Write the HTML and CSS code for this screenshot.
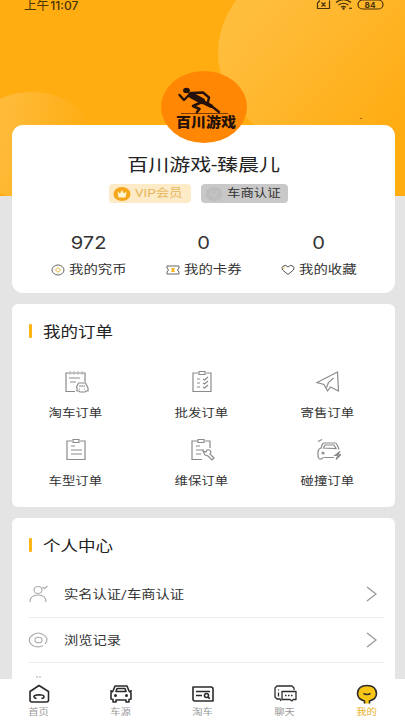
FILE: index.html
```html
<!DOCTYPE html>
<html lang="zh-CN">
<head>
<meta charset="utf-8">
<title>我的</title>
<link rel="stylesheet" href="styles.css">
</head>
<body>
<div class="screen">
  <svg class="backdrop" width="405" height="196" viewBox="0 0 405 196">
    <defs>
      <linearGradient id="g1" x1="0" y1="0.2" x2="0.8" y2="0.8"><stop offset="0.2" stop-color="#ffbd3c"/><stop offset="1" stop-color="#ffac12"/></linearGradient>
      <linearGradient id="g2" x1="0.3" y1="0.3" x2="0.9" y2="0.4"><stop offset="0" stop-color="#ffba38"/><stop offset="1" stop-color="#ffad12"/></linearGradient>
    </defs>
    <rect width="405" height="196" fill="#ffad10"/>
    <ellipse cx="338" cy="53" rx="120" ry="100" fill="url(#g1)"/>
    <ellipse cx="32" cy="146" rx="65" ry="54" fill="url(#g2)"/>
    <path d="M360 118h2v1h-2z" fill="#a66a00"/>
  </svg>

  <header class="status">
    <span class="clock">上午<span class="time">11:07</span></span>
    <svg width="72" height="12" viewBox="0 -.5 72 12" fill="none" stroke="#49330b" stroke-width="1.2">
      <path d="M4 0L1.500 2.500V8H13.500V0M5.500 2l4 4m0-4l-4 4"/>
      <path d="M20 2q7.500-5.500 15 0M22.500 4.500q5-3.500 10 0M25 6.700q2.500-1.500 5 0"/><circle cx="27.500" cy="8" r=".6"/><path d="M33 7.800h3"/>
      <rect x="42" y="-.5" width="25" height="9" rx="4.500"/>
      <text x="48.500" y="7" textLength="11" lengthAdjust="spacingAndGlyphs" class="battery">84</text>
    </svg>
  </header>

  <main>
    <section class="card profile">
      <svg class="avatar" width="88" height="72" viewBox="0 0 88 72">
        <ellipse cx="44" cy="36" rx="43" ry="36" fill="#ff8704"/>
        <path d="M21 42.500h47" stroke="#5c2705" stroke-width=".8"/>
        <g fill="none" stroke="#241109" stroke-linejoin="round" stroke-linecap="round">
          <path d="M31 24L42 30" stroke-width="6"/>
          <path d="M29 24l-5 5-4.500-5" stroke-width="2.400"/>
          <path d="M32 22l11-.5 6 5-1 4.500" stroke-width="2.400"/>
          <path d="M42 31L33 35l6.500 3-2.500 3" stroke-width="2.600"/>
          <path d="M43 31l8 4" stroke-width="4"/>
          <path d="M52 35.500l7 5.500" stroke-width="2.300"/>
        </g>
        <ellipse cx="26.500" cy="19.500" rx="3.400" ry="2.700" fill="#241109"/>
        <text x="16" y="56" textLength="60" lengthAdjust="spacingAndGlyphs" class="logo">百川游戏</text>
      </svg>
      <h1><span class="wide">百川游戏-臻晨儿</span></h1>
      <div class="badges">
        <span class="badge vip"><svg width="18" height="16" viewBox="0 0 18 16"><ellipse cx="9" cy="8" rx="8.500" ry="7" fill="#f5a719"/><path d="M4.500 5.500l2.500 2 2-3.500 2 3.500 2.500-2-1 6h-7z" fill="#fff6d6"/></svg><span class="wide left">VIP会员</span></span>
        <span class="badge dealer"><svg width="18" height="16" viewBox="0 0 18 16"><ellipse cx="9" cy="8" rx="8.500" ry="7" fill="#bdbdbd"/><path d="M5 5l4 6 4-6" fill="none" stroke="#c9c9c9"/></svg><span class="wide left">车商认证</span></span>
      </div>
      <div class="stats">
        <div class="stat"><b><span class="wide">972</span></b>
          <p><svg width="14" height="12" viewBox="0 0 14 12" fill="none"><ellipse cx="7" cy="6" rx="6" ry="5" stroke="#666"/><path d="M7 3.700L9.700 6 7 8.300 4.300 6z" stroke="#e9b236"/></svg><span class="wide left">我的究币</span></p></div>
        <div class="stat"><b><span class="wide">0</span></b>
          <p><svg width="14" height="12" viewBox="0 0 14 12" fill="none"><path d="M1 2h12v2q-3 2 0 4v2H1V8q3-2 0-4z" stroke="#666"/><path d="M5 4h4L8 6l1 2H5l1-2z" fill="#f5b51d"/></svg><span class="wide left">我的卡券</span></p></div>
        <div class="stat"><b><span class="wide">0</span></b>
          <p><svg width="14" height="12" viewBox="0 0 14 12" fill="none"><path d="M7 10.500L1.600 6Q0 3.500 2 2.200 5 .3 7 3q2-2.700 5-.8 2 1.300.4 3.800z" stroke="#555"/><path d="M2.500 5Q2.300 3 4.500 2.800" stroke="#ecd36b"/></svg><span class="wide left">我的收藏</span></p></div>
      </div>
    </section>

    <section class="card orders">
      <h2><i></i><span class="wide left">我的订单</span></h2>
      <div class="grid">
        <div class="order"><svg viewBox="0 0 26 24"><path d="M12 21.500H3V3h3m2 0h2m2 0h2m2 0h2m2 0h2v9M7 1.500v3m4-3v3m4-3v3m4-3v3M6 8h11M7 12h6"/><path d="M13.500 17l2-4h7l2 4 .5 1v3h-2l-1 1h-5l-1-1h-2v-3zM16 16h6m-6 3h1m4 0h1"/></svg><span class="wide">淘车订单</span></div>
        <div class="order"><svg viewBox="0 0 26 24"><path d="M9 3H4v18.500h18V3h-5M10 1.500h6v3h-6zM8 9h3m-3 4h3m-3 4h3M14 9l1.500 1 3.500-3m-5 6l1.500 1 3.500-3m-5 6l1.500 1 3.500-3"/></svg><span class="wide">批发订单</span></div>
        <div class="order"><svg viewBox="0 0 26 24"><path d="M22.500 2L2 12.500l7 2L12.500 21l3-4 8 4zM18.500 8l-5 4.500-2 5"/></svg><span class="wide">寄售订单</span></div>
        <div class="order"><svg viewBox="0 0 26 24"><path d="M9 3H4v18.500h18V3h-5M10 1.500h6v3h-6zM8 8h4m-4 4h11M8 16h11"/></svg><span class="wide">车型订单</span></div>
        <div class="order"><svg viewBox="0 0 26 24"><path d="M9 3H3v18.500h10M16 3h5v7M9 1.500h6v3H9zM7 8h4m-4 4h8m-8 4h5"/><path d="M14 13l3 1 1-2q3-1 4 2l-1 2 4 4-2 2-4-4-3-1z"/></svg><span class="wide">维保订单</span></div>
        <div class="order"><svg viewBox="0 0 26 24"><path d="M19 19.500H8.500M8 19.500q-1 2-3.500 1.500-1.500-.5-1.500-3v-4q0-3 3-4l1.500-4Q8 5 9.500 5h10.500q1.500 0 2 1.500l2 5M8.500 10l1.500-3h9l2 3.500zM3 3.500l4-2"/><circle cx="8" cy="15" r="1"/><path d="M25 13.500l-5 4h3l-2 4 5-5h-3z"/></svg><span class="wide">碰撞订单</span></div>
      </div>
    </section>

    <section class="card center">
      <h2><i></i><span class="wide left">个人中心</span></h2>
      <div class="row"><svg width="22" height="18" viewBox="0 0 22 18"><ellipse cx="10" cy="5" rx="4" ry="3.500"/><path d="M2 17q0-7 8-7t8 7M14.500 2l2 1.500L19.500 1"/></svg><span class="wide left">实名认证/车商认证</span><svg class="arrow" width="11" height="16" viewBox="0 0 11 16"><path d="M1 1l9 7-9 7"/></svg></div>
      <div class="row"><svg width="22" height="18" viewBox="0 0 22 18"><path d="M15 14.800Q10 17 5 14.800-2.500 9 5 3.800q6-4 12 1 4 3.700 0 8"/><ellipse cx="10.500" cy="9" rx="3.500" ry="2.800"/></svg><span class="wide left">浏览记录</span><svg class="arrow" width="11" height="16" viewBox="0 0 11 16"><path d="M1 1l9 7-9 7"/></svg></div>
      <div class="row"><svg width="22" height="18" viewBox="0 0 22 18"><path d="M8 1h2m1 0h2"/></svg></div>
    </section>
  </main>

  <nav class="tabs">
    <div class="tab"><svg viewBox="0 0 24 20"><path d="M12 1.500L21.500 7.500V16q0 2-2 2H5q-2 0-2-2V7.500z"/><path d="M9.500 14.500q-2.500-.4-2.500-2t5-1.800q5 0 5 1.800t-2.500 2"/></svg><span class="wide">首页</span></div>
    <div class="tab"><svg viewBox="0 0 24 20"><path d="M4 7l2-5h12l2 5 2 2v6l-2 .5V18h-3v-2H7v2H4v-2.500L2 15V9zM7 7.500l1-3h8l1 3zM1 7h2m18 0h2"/><circle cx="6.500" cy="11.500" r=".7"/><circle cx="17.500" cy="11.500" r=".7"/></svg><span class="wide">车源</span></div>
    <div class="tab"><svg viewBox="0 0 24 20"><path d="M2 3h18q2 0 2 2v12H4q-2 0-2-2zM5 7.500h14M5 11.500h6"/><circle cx="15.500" cy="11.500" r="2"/><path d="M17 13.500l2 1"/></svg><span class="wide">淘车</span></div>
    <div class="tab"><svg viewBox="0 0 24 20" class="chat"><path d="M7.500 15H4l-2-2V4l2-2h15l2 2v2M7 15l1 2M5.500 5.500v1m0 2v4"/><path d="M9 7.500h14v8h-3l-1 1.500-2-1.500H9zM12 11.500h1.500m1.500 0h1.500m1.500 0h1.500"/></svg><span class="wide">聊天</span></div>
    <div class="tab active"><svg viewBox="0 0 24 20"><path d="M9.500 19.500V17Q2.500 15 2.500 9.500 3 1.500 12 1.500t9.500 8Q21.500 15 14.500 17v2.500" fill="#f9c514"/><path d="M8.500 9.500q3.500 2 7 0"/></svg><span class="wide">我的</span></div>
  </nav>
</div>
</body>
</html>
```
FILE: styles.css
```css
* { box-sizing: border-box; margin: 0; padding: 0; }
body { width: 405px; height: 720px; overflow: hidden; font-family: Roboto, "Noto Sans CJK SC", sans-serif; color: #333; }
.screen { position: relative; height: 720px; display: flex; flex-direction: column; background: #e4e4e4; overflow: hidden; }
.backdrop { position: absolute; left: 0; top: 0; }
.wide { display: inline-block; white-space: nowrap; transform: scaleX(1.2); }
.left { transform-origin: left center; }
.status { position: relative; flex: none; height: 125px; display: flex; align-items: flex-start; justify-content: space-between; padding: 0 17px 0 24px; color: #49330b; }
.clock { font: 12px/9px "Noto Sans CJK SC", sans-serif; transform: scaleX(1.05); transform-origin: left center; }
.time { font: 500 11.500px/9px Inter, sans-serif; margin-left: 1px; }
.battery { font: 700 8px Inter, sans-serif; fill: #49330b; stroke: none; }
.logo { font: 900 14px "Noto Sans CJK SC", sans-serif; fill: #241109; }
main { position: relative; flex: 1; min-height: 0; padding: 0 10px 0 12px; display: flex; flex-direction: column; }
.card { flex: none; background: #fff; border-radius: 6px; }
.profile { height: 168px; border-radius: 11px; margin-bottom: 11px; display: flex; flex-direction: column; align-items: center; }
.avatar { margin-top: -54px; flex: none; }
h1 { margin-top: 9px; font-size: 17.500px; line-height: 26px; font-weight: 400; color: #222; }
.badges { display: flex; gap: 10px; margin-top: 6px; margin-left: -10px; }
.badge { height: 19px; display: flex; align-items: center; padding-left: 4px; border-radius: 4px; font-size: 11.200px; line-height: 19px; gap: 4px; }
.vip { width: 82px; background: #fdebc8; color: #e7b65a; }
.dealer { width: 87px; background: #c8c8c8; color: #333; }
.stats { width: 345px; display: grid; grid-template-columns: repeat(3, 115px); margin-top: 28px; }
.stat { text-align: center; }
.stat b { display: block; font: 400 17.500px/24px Inter, sans-serif; color: #333; }
.stat b .wide { transform: scaleX(1.15); }
.stat p { display: flex; align-items: center; gap: 4px; padding-left: 20px; margin-top: 6px; font-size: 12px; line-height: 18px; }
.orders { height: 203px; margin-bottom: 11px; }
h2 { display: flex; align-items: center; height: 54px; padding-left: 17px; font-size: 14.600px; font-weight: 400; color: #222; }
h2 .wide { margin-top: -2px; }
h2 i { width: 3px; height: 14px; border-radius: 1px; background: #fdb515; margin-right: 11px; }
.grid { display: grid; grid-template-columns: repeat(3, 126px); grid-template-rows: 68px 68px; padding: 12px 0 0 .5px; }
.order { display: flex; flex-direction: column; align-items: center; font-size: 11.200px; line-height: 18px; }
.order svg { width: 26px; height: 24px; fill: none; stroke: #8b8b8b; stroke-width: 1.200; margin-bottom: 11px; }
.center { height: 220px; }
.row { height: 45.500px; display: flex; align-items: center; margin: 0 11px 0 16px; border-bottom: 1px solid #eee; font-size: 12px; }
.row .wide { margin-top: -1px; transform: scaleX(1.19); }
.row svg { fill: none; stroke: #aaa; stroke-width: 1.100; margin-right: 13.500px; }
.row .arrow { margin: 0 7px 0 auto; stroke: #999; stroke-width: 1.400; }
.tabs { position: relative; flex: none; height: 41px; display: grid; grid-template-columns: repeat(5, 82px); margin-left: -2px; background: #fff; }
.tab { display: flex; flex-direction: column; align-items: center; padding-top: 5px; font-size: 8.600px; line-height: 12px; color: #999; }
.tab svg { width: 24px; height: 20px; fill: none; stroke: #2b2b2b; stroke-width: 1.600; stroke-linejoin: round; margin-bottom: 2px; }
.tab .chat { stroke-width: 1.300; }
.active { color: #e8b22c; }
```
